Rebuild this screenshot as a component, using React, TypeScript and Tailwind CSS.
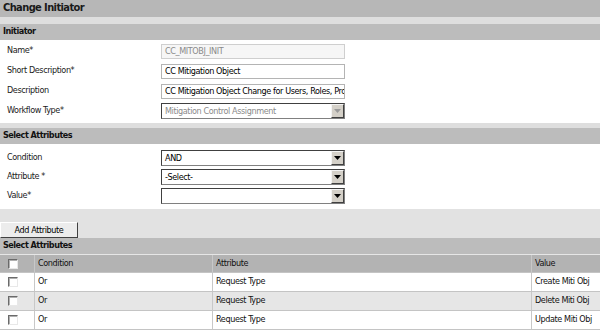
import React from "react";

const FONT = "font-['DejaVu_Sans_Condensed','Liberation_Sans',sans-serif]";
const TXT = "text-[9px] tracking-[-0.4px]";

function Arrow({ disabled }: { disabled?: boolean }) {
  return (
    <div className="w-[13px] h-full flex items-center justify-center bg-[#d4d0c8] border-t border-l border-t-[#f4f4f4] border-l-[#f4f4f4] border-b border-r border-b-[#404040] border-r-[#404040]">
      <svg width="7" height="4" viewBox="0 0 7 4">
        <polygon points="0,0 7,0 3.5,4" fill={disabled ? "#9a9a9a" : "#000"} />
      </svg>
    </div>
  );
}

function Select({ value, disabled }: { value: string; disabled?: boolean }) {
  return (
    <div
      className={`w-[184px] h-[16px] flex items-stretch border border-t-[#404040] border-l-[#404040] border-b-[#808080] border-r-[#808080] ${
        disabled ? "bg-white text-[#8a8a8a]" : "bg-white text-black"
      }`}
    >
      <div className={`flex-1 pl-[3px] ${TXT} leading-[14px] overflow-hidden whitespace-nowrap`}>{value}</div>
      <Arrow disabled={disabled} />
    </div>
  );
}

function Input({ value, disabled }: { value: string; disabled?: boolean }) {
  return (
    <div
      className={`w-[184px] h-[15px] border ${TXT} leading-[13px] pl-[3px] overflow-hidden whitespace-nowrap ${
        disabled ? "bg-[#f6f6f6] border-[#cfcfcf] text-[#8a8a8a]" : "bg-white border-[#b4b4b4] text-black"
      }`}
    >
      {value}
    </div>
  );
}

function Row({ label, children, h = "h-[20px]" }: { label: string; children: React.ReactNode; h?: string }) {
  return (
    <div className={`flex items-center ${h}`}>
      <div className={`w-[161px] pl-[7px] ${TXT} text-[#1a1a1a]`}>{label}</div>
      {children}
    </div>
  );
}

function SectionHeader({ title }: { title: string }) {
  return (
    <div className="h-[16px] bg-[#bcbcbc] flex items-center pl-[3px] text-[9px] tracking-[-0.5px] font-bold text-[#111]">
      {title}
    </div>
  );
}

function Check() {
  return (
    <div className="w-[10px] h-[10px] bg-white border border-t-[#6a6a6a] border-l-[#6a6a6a] border-b-[#e8e8e8] border-r-[#e8e8e8] shadow-[inset_1px_1px_0_#b0b0b0]" />
  );
}

export default function App() {
  const rows = [
    { c: "Or", a: "Request Type", v: "Create Miti Obj" },
    { c: "Or", a: "Request Type", v: "Delete Miti Obj" },
    { c: "Or", a: "Request Type", v: "Update Miti Obj" },
  ];
  return (
    <div className={`w-[600px] h-[332px] overflow-hidden bg-white ${FONT}`}>
      <div className="h-[17px] bg-[#b7b7b7] flex items-center pl-[3px] text-[11px] tracking-[-0.6px] font-bold text-[#1a1a1a]">
        Change Initiator
      </div>
      <div className="h-[7px] bg-[#dedede]" />
      <SectionHeader title="Initiator" />
      <div className="pt-[1px] pb-[2px]">
        <Row label="Name*">
          <Input value="CC_MITOBJ_INIT" disabled />
        </Row>
        <Row label="Short Description*">
          <Input value="CC Mitigation Object" />
        </Row>
        <Row label="Description">
          <Input value="CC Mitigation Object Change for Users, Roles, Profiles" />
        </Row>
        <Row label="Workflow Type*">
          <Select value="Mitigation Control Assignment" disabled />
        </Row>
      </div>
      <div className="h-[5px] bg-[#dedede]" />
      <SectionHeader title="Select Attributes" />
      <div className="pt-[4px] pb-[4px]">
        <Row label="Condition" h="h-[19px]">
          <Select value="AND" />
        </Row>
        <Row label="Attribute *" h="h-[19px]">
          <Select value="-Select-" />
        </Row>
        <Row label="Value*" h="h-[19px]">
          <Select value="" />
        </Row>
      </div>
      <div className="h-[29px] bg-[#e2e2e2] pt-[7px]">
        <button className={`w-[78px] h-[16px] bg-[#ececec] border border-t-white border-l-white border-b-[#404040] border-r-[#404040] ${TXT} leading-[14px] text-black`}>
          Add Attribute
        </button>
      </div>
      <SectionHeader title="Select Attributes" />
      <div className="h-[1px] bg-[#e6e6e6]" />
      <div className={`flex h-[17px] bg-[#b3b3b3] ${TXT} text-[#111]`}>
        <div className="w-[35px] flex items-center pl-[8px] border-r border-[#c8c8c8]">
          <Check />
        </div>
        <div className="w-[178px] flex items-center pl-[3px] border-r border-[#c8c8c8]">Condition</div>
        <div className="w-[319px] flex items-center pl-[3px] border-r border-[#c8c8c8]">Attribute</div>
        <div className="flex-1 flex items-center pl-[3px] whitespace-nowrap">Value</div>
      </div>
      {rows.map((r, i) => (
        <div
          key={i}
          className={`flex h-[19px] border-t border-[#c4c4c4] ${TXT} text-[#111] ${
            i % 2 === 1 ? "bg-[#e6e6e6]" : "bg-white"
          }`}
        >
          <div className="w-[35px] flex items-center pl-[8px] border-r border-[#c8c8c8]">
            <Check />
          </div>
          <div className="w-[178px] flex items-center pl-[3px] border-r border-[#c8c8c8]">{r.c}</div>
          <div className="w-[319px] flex items-center pl-[3px] border-r border-[#c8c8c8]">{r.a}</div>
          <div className="flex-1 flex items-center pl-[3px] whitespace-nowrap">{r.v}</div>
        </div>
      ))}
      <div className="h-[1px] bg-[#c4c4c4]" />
    </div>
  );
}
